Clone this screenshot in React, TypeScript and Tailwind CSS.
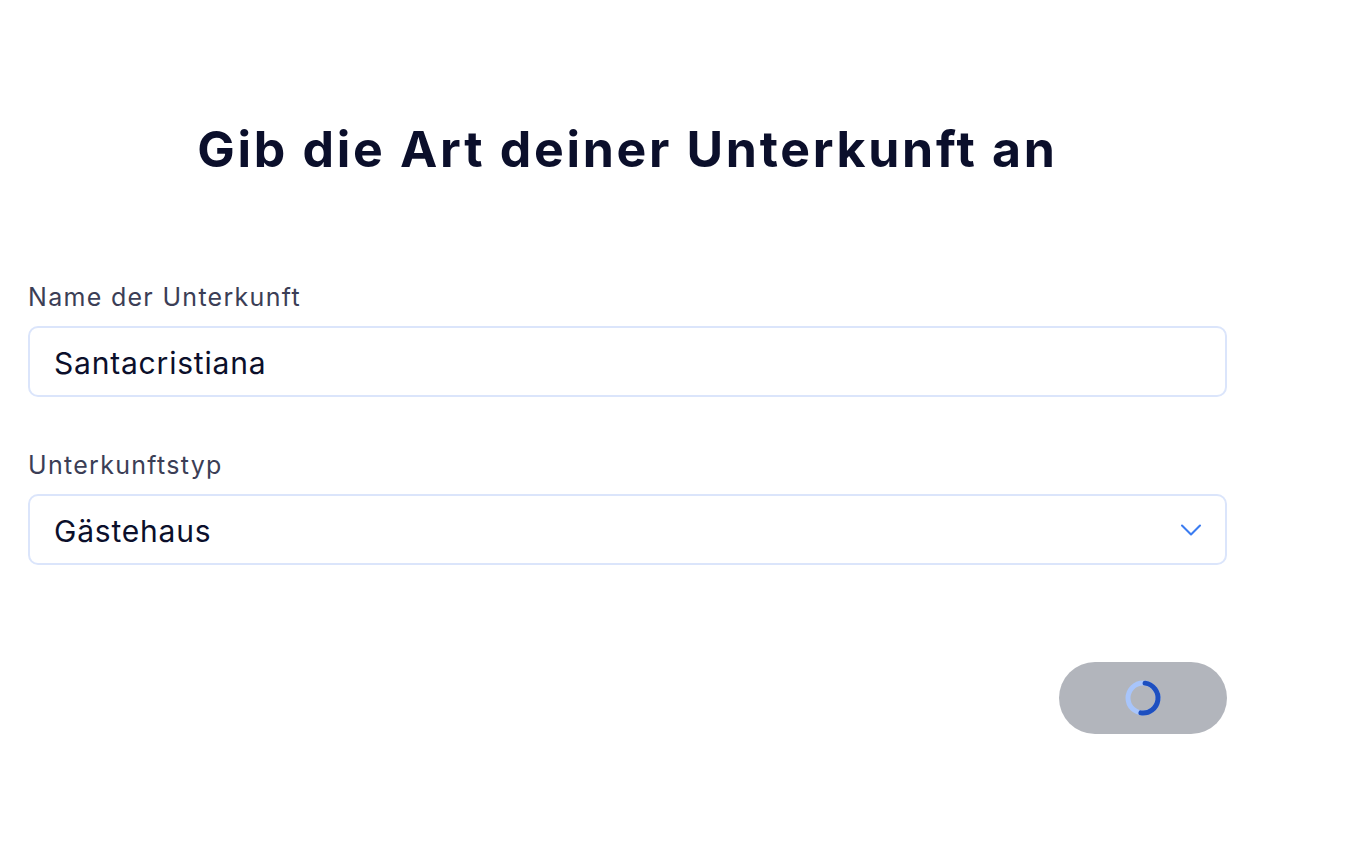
import { ChevronDown } from "lucide-react"

function Spinner() {
  return (
    <svg width="40" height="40" viewBox="0 0 40 40">
      <circle cx="20" cy="20" r="15" fill="none" stroke="#a8c5fb" strokeWidth="5" />
      <path d="M20 5 A15 15 0 0 1 20 35" fill="none" stroke="#1d4fc0" strokeWidth="5" strokeLinecap="round" transform="rotate(8 20 20)" />
    </svg>
  )
}

export default function App() {
  return (
    <div className="min-h-screen bg-white font-['Inter',sans-serif] text-[#0b0f2b]">
      <div className="w-[1199px] ml-[28px] pt-[111px]">
        <h1 className="text-center text-[50px] font-bold leading-[76px] tracking-[2.7px]">
          Gib die Art deiner Unterkunft an
        </h1>

        <div className="mt-[95px] flex flex-col">
          <label className="text-[25px] leading-[30px] tracking-[1.3px] text-[#3b3e56]">Name der Unterkunft</label>
          <div className="mt-[14px] h-[71px] rounded-[10px] border-2 border-[#dbe5fb] flex items-center px-[24px] pt-[3px]">
            <span className="text-[30px] tracking-[0.8px]">Santacristiana</span>
          </div>

          <label className="mt-[53px] text-[25px] leading-[30px] tracking-[1.3px] text-[#3b3e56]">Unterkunftstyp</label>
          <div className="mt-[14px] h-[71px] rounded-[10px] border-2 border-[#dbe5fb] flex items-center justify-between pl-[24px] pr-[16px]">
            <span className="text-[30px] tracking-[0.8px] pt-[3px]">Gästehaus</span>
            <ChevronDown className="size-[36px] text-[#3b7cf1]" strokeWidth={1.4} />
          </div>
        </div>

        <div className="mt-[97px] flex justify-end">
          <div className="w-[168px] h-[72px] rounded-full bg-[#b2b5bc] flex items-center justify-center">
            <Spinner />
          </div>
        </div>
      </div>
    </div>
  )
}
